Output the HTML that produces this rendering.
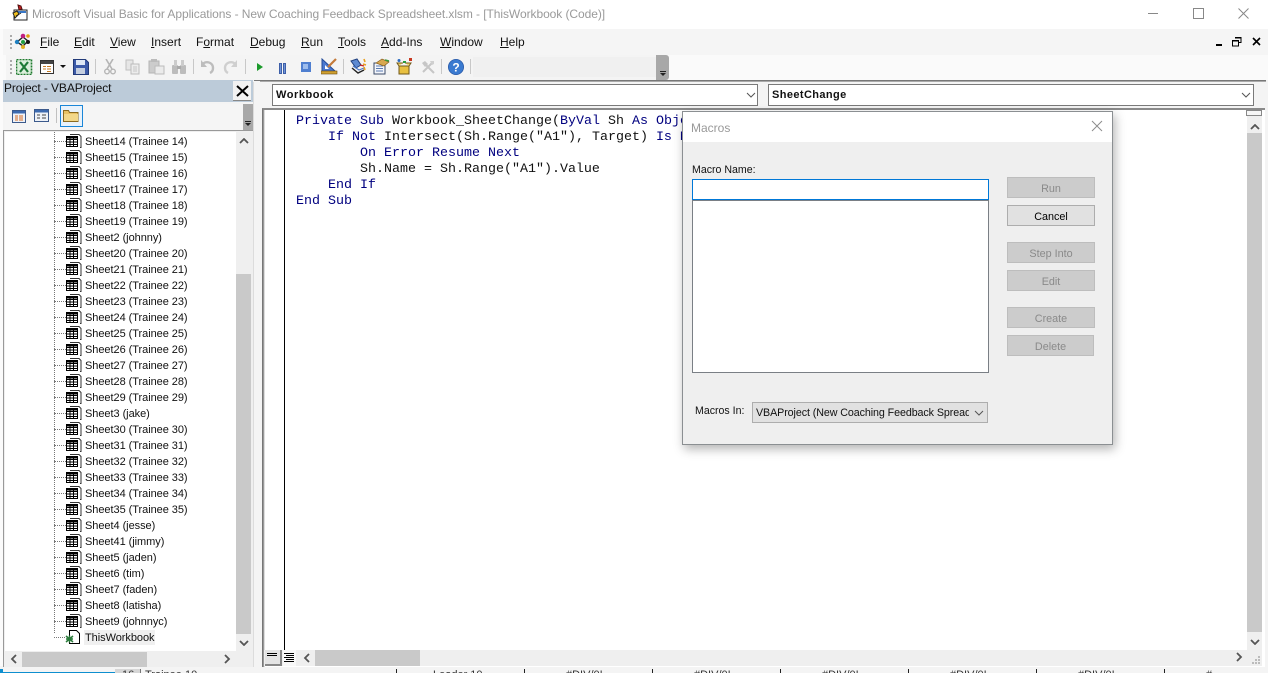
<!DOCTYPE html>
<html><head><meta charset="utf-8"><style>
html,body{margin:0;padding:0}
body{width:1268px;height:673px;overflow:hidden;position:relative;background:#fbfbfb;font-family:"Liberation Sans",sans-serif;font-size:11.5px;color:#000}
div,span,svg{position:absolute}
u{text-decoration:underline}
.t{white-space:nowrap;line-height:16px}
.m{top:34px;font-size:12px;white-space:nowrap;line-height:16px;color:#111}
.r{left:85px;font-size:11px;letter-spacing:-.05px;margin-top:1px;white-space:nowrap;line-height:16px;color:#111}
.s{left:66px;width:16px;height:16px}
.d{left:54px;width:12px;border-top:1px dotted #777;height:0}
.c{left:296px;margin-top:2px;font-family:"Liberation Mono",monospace;font-size:13.33px;line-height:16px;white-space:pre;color:#111}
.c b{font-weight:normal;color:#00007f}
.b{left:1007px;width:86px;height:19px;border:1px solid #bdbdbd;background:#ccc;color:#8a8a8a;text-align:center;line-height:22px;font-size:10.8px;overflow:hidden}
.x{top:668px;font-size:11px;color:#333;white-space:nowrap;line-height:12px}
.k{top:3px;width:1px;height:4px;background:#222}
</style></head><body>
<svg width="0" height="0"><defs>
<symbol id="sh" viewBox="0 0 16 16"><path d="M4 1.5h9l2 2V14.5H14" fill="#fff" stroke="#333"/><rect x="0.5" y="3.5" width="11" height="10" fill="#fff" stroke="#000"/><path d="M0.5 6.5h11M0.5 9h11M0.5 11.5h11M4 3.5v10M7.5 3.5v10" stroke="#000" fill="none"/><rect x="0.5" y="3.5" width="11" height="2" fill="#000"/></symbol>
<symbol id="cv" viewBox="0 0 10 6"><path d="M1 1l4 4 4-4" fill="none" stroke="#555" stroke-width="1"/></symbol>
</defs></svg>

<!-- bottom spreadsheet strip -->
<div style="left:0;top:666px;width:1268px;height:7px;background:#f4f4f4;overflow:hidden">
<div style="left:0;top:6px;width:115px;height:1px;background:#0e8fcf"></div>
<div style="left:0;top:3px;width:3px;height:4px;background:#0e8fcf"></div>
<div style="left:115px;top:3px;width:25px;height:4px;background:#d6d6d6"></div>
<div class="k" style="left:140px;background:#777"></div>
<div class="k" style="left:396px"></div>
<div class="k" style="left:524px"></div>
<div class="k" style="left:652px"></div>
<div class="k" style="left:780px"></div>
<div class="k" style="left:908px"></div>
<div class="k" style="left:1036px"></div>
<div class="k" style="left:1164px"></div>
<span class="x" style="left:122px;top:3px">16</span>
<span class="x" style="left:145px;top:3px">Trainee 10</span>
<span class="x" style="left:433px;top:3px">Leader 10</span>
<span class="x" style="left:566px;top:3px">#DIV/0!</span>
<span class="x" style="left:694px;top:3px">#DIV/0!</span>
<span class="x" style="left:822px;top:3px">#DIV/0!</span>
<span class="x" style="left:950px;top:3px">#DIV/0!</span>
<span class="x" style="left:1078px;top:3px">#DIV/0!</span>
<span class="x" style="left:1206px;top:3px">#</span>
</div>

<!-- title bar -->
<div style="left:0;top:0;width:1268px;height:29px;background:#fff"></div>
<svg style="left:11px;top:4px" width="18" height="18" viewBox="0 0 18 18"><path d="M3 6h13v10H3z" fill="#fff" stroke="#222"/><rect x="4" y="7" width="11" height="2" fill="#3a78c8"/><path d="M7 1l3 1 1 3-3 1z" fill="#c02020" stroke="#511"/><path d="M2 9l4-2 2 3-4 4z" fill="#f0c020" stroke="#222"/><path d="M5 12l5-3" stroke="#222"/></svg>
<span class="t" style="left:32px;top:6px;font-size:12px;color:#9a9a9a;letter-spacing:-.065px">Microsoft Visual Basic for Applications - New Coaching Feedback Spreadsheet.xlsm - [ThisWorkbook (Code)]</span>
<div style="left:1148px;top:13px;width:10px;height:1px;background:#888"></div>
<div style="left:1193px;top:8px;width:9px;height:9px;border:1px solid #888"></div>
<svg style="left:1238px;top:8px" width="11" height="11"><path d="M.5.5l10 10M10.5.5l-10 10" stroke="#888" fill="none"/></svg>

<!-- menu bar -->
<div style="left:3px;top:29px;width:1265px;height:26px;background:#f5f5f5"></div>
<div style="left:10px;top:35px;width:2px;height:14px;background:repeating-linear-gradient(#aaa 0 2px,transparent 2px 4px)"></div>
<svg style="left:14px;top:33px" width="18" height="17" viewBox="0 0 18 17"><path d="M3 9l6-5 5 4-5 5z" fill="none" stroke="#222" stroke-width="1.4"/><circle cx="9" cy="3" r="2.3" fill="#c02080"/><circle cx="14" cy="3" r="1.8" fill="#e0a010"/><circle cx="3" cy="9" r="2.2" fill="#2080c0"/><circle cx="9" cy="9" r="2" fill="#20a040"/><circle cx="14" cy="9" r="2" fill="#111"/><circle cx="9" cy="14" r="2" fill="#e0b020"/></svg>
<span class="m" style="left:40px"><u>F</u>ile</span>
<span class="m" style="left:74px"><u>E</u>dit</span>
<span class="m" style="left:110px"><u>V</u>iew</span>
<span class="m" style="left:151px"><u>I</u>nsert</span>
<span class="m" style="left:196px">F<u>o</u>rmat</span>
<span class="m" style="left:250px"><u>D</u>ebug</span>
<span class="m" style="left:301px"><u>R</u>un</span>
<span class="m" style="left:338px"><u>T</u>ools</span>
<span class="m" style="left:381px"><u>A</u>dd-Ins</span>
<span class="m" style="left:440px"><u>W</u>indow</span>
<span class="m" style="left:500px"><u>H</u>elp</span>
<div style="left:1216px;top:44px;width:6px;height:2px;background:#000"></div>
<svg style="left:1232px;top:37px" width="10" height="10"><path d="M3 .5h6v5H7M.5 3.5h6v5.5h-6z" fill="none" stroke="#000"/><path d="M3 1h6M0 4h6" stroke="#000"/></svg>
<svg style="left:1252px;top:37px" width="9" height="9"><path d="M1 1l7 7M8 1l-7 7" stroke="#000" stroke-width="1.6"/></svg>

<!-- toolbar -->
<div style="left:3px;top:55px;width:1265px;height:25px;background:#fafafa"></div>
<div style="left:6px;top:55px;width:650px;height:25px;background:#f4f4f4"></div>
<div style="left:10px;top:60px;width:2px;height:14px;background:repeating-linear-gradient(#aaa 0 2px,transparent 2px 4px)"></div>
<svg style="left:16px;top:59px" width="17" height="16"><rect x=".5" y=".5" width="15" height="15" fill="#dcefdc" stroke="#1f7a2f" stroke-width="1.6" stroke-dasharray="2 1"/><path d="M4 3l8 10M12 3L4 13" stroke="#1d7a36" stroke-width="2.2"/></svg>
<svg style="left:40px;top:60px" width="15" height="14"><rect x=".5" y=".5" width="13" height="13" fill="#fff" stroke="#333"/><rect x="1" y="1" width="12" height="3" fill="#444"/><path d="M3 6.5h3M7 6.5h4M3 9h3M7 9h4M7 11.5h4" stroke="#c77b25"/></svg>
<div style="left:60px;top:65px;border-left:3px solid transparent;border-right:3px solid transparent;border-top:3px solid #111"></div>
<svg style="left:73px;top:59px" width="16" height="16"><path d="M.5.5h12l3 3v12H.5z" fill="#3c5aa8" stroke="#223a78"/><rect x="3" y="1" width="9" height="5" fill="#dfe8f5"/><rect x="3" y="9" width="9" height="6" fill="#c5cfe0"/></svg>
<div style="left:95px;top:59px;width:1px;height:15px;background:#c8c8c8"></div>
<svg style="left:104px;top:59px" width="12" height="16"><path d="M2 0l6 10M9 0L3 10" stroke="#b5b5b5" stroke-width="1.6"/><circle cx="3" cy="12.5" r="2.3" fill="none" stroke="#b5b5b5" stroke-width="1.4"/><circle cx="9" cy="12.5" r="2.3" fill="none" stroke="#b5b5b5" stroke-width="1.4"/></svg>
<svg style="left:125px;top:59px" width="16" height="16"><path d="M1 1h7v10H1z" fill="#e6e6e6" stroke="#c0c0c0"/><path d="M6 5h8v10H6z" fill="#ececec" stroke="#bbb"/><path d="M8 8h4M8 10h4M8 12h4" stroke="#c6c6c6"/></svg>
<svg style="left:148px;top:59px" width="17" height="16"><rect x="1" y="2" width="10" height="12" fill="#ccc" stroke="#b5b5b5"/><rect x="3" y="0" width="6" height="3" fill="#bbb"/><path d="M7 7h9v8H7z" fill="#ebebeb" stroke="#bbb"/></svg>
<svg style="left:171px;top:59px" width="16" height="16"><rect x="1" y="6" width="6" height="9" rx="1" fill="#bcbcbc"/><rect x="9" y="6" width="6" height="9" rx="1" fill="#bcbcbc"/><rect x="3" y="1" width="3" height="6" fill="#ccc"/><rect x="10" y="1" width="3" height="6" fill="#ccc"/><rect x="6" y="7" width="4" height="3" fill="#aaa"/></svg>
<div style="left:193px;top:59px;width:1px;height:15px;background:#c8c8c8"></div>
<svg style="left:200px;top:59px" width="15" height="15"><path d="M2 6c3-5 11-3 11 3 0 2-1 4-3 5" fill="none" stroke="#bdbdbd" stroke-width="2.4"/><path d="M1 1v7h6z" fill="#bdbdbd"/></svg>
<svg style="left:223px;top:59px" width="15" height="15"><path d="M13 6c-3-5-11-3-11 3 0 2 1 4 3 5" fill="none" stroke="#cfcfcf" stroke-width="2.4"/><path d="M14 1v7H8z" fill="#cfcfcf"/></svg>
<div style="left:245px;top:59px;width:1px;height:15px;background:#c8c8c8"></div>
<div style="left:257px;top:63px;border-left:6px solid #1b9a2b;border-top:4.5px solid transparent;border-bottom:4.5px solid transparent"></div>
<div style="left:279px;top:63px;height:9px;background:#6f93d6;border:1px solid #3d5fa8;width:1px"></div>
<div style="left:283px;top:63px;height:9px;background:#6f93d6;border:1px solid #3d5fa8;width:1px"></div>
<svg style="left:301px;top:62px" width="10" height="10"><rect width="10" height="10" fill="#4f7fd0"/><rect x="2" y="2" width="5" height="5" fill="#9dbcec"/></svg>
<svg style="left:321px;top:58px" width="17" height="17"><path d="M1 1v12h13z" fill="#4a78d0" stroke="#224a98"/><path d="M4 7v4h4z" fill="#fff"/><path d="M7 9l8-8" stroke="#c47a3a" stroke-width="2.2"/><rect x="0" y="13" width="16" height="3" fill="#d0a030" stroke="#6a4a10" stroke-width=".6"/></svg>
<div style="left:343px;top:59px;width:1px;height:15px;background:#c8c8c8"></div>
<svg style="left:350px;top:58px" width="17" height="17"><path d="M1 3l6-2 4 6-5 3z" fill="#5d8ad2" stroke="#22417f"/><path d="M2 10l6 5 6-3" fill="none" stroke="#222" stroke-width="1.4"/><path d="M3 8l6 4 5-2" fill="none" stroke="#4a78c8" stroke-width="1.2"/><path d="M14 1l1 3M13 6l3 1M14 9l1 3" stroke="#e8a020" stroke-width="1.6"/><path d="M10 7l4 1" stroke="#c82020" stroke-width="1.4"/></svg>
<svg style="left:373px;top:58px" width="17" height="17"><path d="M1 5h11v11H1z" fill="#f4f6fb" stroke="#3a4a68"/><path d="M3 8h7M3 10.5h7M3 13h7" stroke="#5a7ab0"/><path d="M3 5l6-4 7 3-5 4z" fill="#d8a850" stroke="#886020" stroke-width=".7"/><path d="M12 2l4 1" stroke="#3a9a3a" stroke-width="1.5"/></svg>
<svg style="left:396px;top:58px" width="17" height="17"><path d="M3 8h10v8H3z" fill="#e8c040" stroke="#70581a"/><path d="M3 8l-2-3h6M13 8l2-3H9" fill="#f0d870" stroke="#70581a"/><circle cx="3" cy="2.5" r="1.5" fill="#2a6ac0"/><path d="M7 4h3" stroke="#2a9a3a" stroke-width="2"/><rect x="13" y="0" width="3" height="3" fill="#c83820"/></svg>
<svg style="left:421px;top:60px" width="14" height="14"><path d="M5 5l8 8M11 3l-9 9" stroke="#c6c6c6" stroke-width="2"/><path d="M1 3l3-2 3 3-3 3z" fill="#c6c6c6"/><path d="M9 1h4v3l-2 1z" fill="#d0d0d0"/></svg>
<div style="left:441px;top:59px;width:1px;height:15px;background:#c8c8c8"></div>
<svg style="left:448px;top:59px" width="16" height="16"><circle cx="8" cy="8" r="7.6" fill="#3a7ad0" stroke="#2a5aa8" stroke-width=".8"/><text x="8" y="12.5" font-family="Liberation Sans" font-size="12" font-weight="bold" fill="#fff" text-anchor="middle">?</text></svg>
<div style="left:470px;top:59px;width:1px;height:15px;background:#c8c8c8"></div>
<div style="left:473px;top:57px;width:183px;height:20px;background:#f0f0f0"></div>
<div style="left:656px;top:55px;width:13px;height:25px;background:#a8a8a8;border-radius:0 3px 3px 0"></div>
<div style="left:660px;top:71px;width:6px;height:1px;background:#222"></div>
<div style="left:660px;top:73px;border-left:3px solid transparent;border-right:3px solid transparent;border-top:3px solid #222"></div>

<!-- rule under toolbar -->
<div style="left:3px;top:80px;width:1265px;height:586px;background:#f4f4f4"></div>
<div style="left:254px;top:80px;width:1012px;height:1px;background:#777"></div>
<div style="left:260px;top:81px;width:1006px;height:1px;background:#aaa"></div>

<!-- project pane -->
<div style="left:3px;top:80px;width:250px;height:22px;background:#bccbd9"></div>
<span class="t" style="left:4px;top:80px;font-size:12px;color:#111;letter-spacing:-.1px">Project - VBAProject</span>
<div style="left:233px;top:81px;width:18px;height:19px;background:#f2f2f2;border-bottom:1px solid #888"></div>
<svg style="left:236px;top:85px" width="13" height="12"><path d="M1 1l11 10M12 1L1 11" stroke="#000" stroke-width="2"/></svg>
<div style="left:5px;top:104px;width:248px;height:26px;background:#f5f5f5"></div>
<svg style="left:12px;top:110px" width="15" height="14"><rect x=".5" y=".5" width="13" height="12" fill="#eef2f8" stroke="#3c5a8c"/><rect x="1" y="1" width="12" height="2.5" fill="#3c6ab0"/><path d="M3 6h3M7 6h4M3 8h3M7 8h4M3 10h3M7 10h4" stroke="#d86a20"/></svg>
<svg style="left:34px;top:109px" width="16" height="14"><rect x=".5" y=".5" width="14" height="12" fill="#eef2f8" stroke="#3c5a8c"/><rect x="1" y="1" width="13" height="2.5" fill="#3c6ab0"/><path d="M3 6h3M8 6h4M3 9h3M8 9h4" stroke="#444"/></svg>
<div style="left:56px;top:108px;width:1px;height:15px;background:#c0c0c0"></div>
<div style="left:60px;top:105px;width:21px;height:20px;border:1px solid #1a86d8;background:#e8f2fb"></div>
<svg style="left:63px;top:108px" width="16" height="15"><path d="M.5 2.5h5l1 2h8.5v9H.5z" fill="#e8c264" stroke="#8a6a20"/><path d="M1 6h14v7H1z" fill="#f2d88a"/></svg>
<div style="left:243px;top:104px;width:10px;height:26px;background:#a8a8a8"></div>
<div style="left:245px;top:121px;width:6px;height:1px;background:#222"></div>
<div style="left:245px;top:123px;border-left:3px solid transparent;border-right:3px solid transparent;border-top:3px solid #222"></div>

<div style="left:3px;top:130px;width:250px;height:537px;background:#efefef;border-top:1px solid #999;border-left:1px solid #999;box-sizing:border-box"></div>
<div style="left:5px;top:132px;width:231px;height:519px;background:#fff"></div>
<div style="left:54px;top:132px;height:501px;width:0;border-left:1px dotted #777"></div>
<div style="left:236px;top:132px;width:16px;height:519px;background:#efefef"></div>
<div style="left:236px;top:274px;width:15px;height:360px;background:#c9c9c9"></div>
<svg style="left:239px;top:138px" width="10" height="6" viewBox="0 0 10 6"><path d="M1 5l4-4 4 4" fill="none" stroke="#555" stroke-width="1.8"/></svg>
<svg style="left:239px;top:640px" width="10" height="6" viewBox="0 0 10 6"><path d="M1 1l4 4 4-4" fill="none" stroke="#555" stroke-width="1.8"/></svg>
<div style="left:5px;top:652px;width:247px;height:15px;background:#efefef"></div>
<div style="left:22px;top:652px;width:125px;height:15px;background:#c9c9c9"></div>
<svg style="left:10px;top:654px" width="7" height="10"><path d="M6 1L2 5l4 4" fill="none" stroke="#555" stroke-width="1.8"/></svg>
<svg style="left:224px;top:654px" width="7" height="10"><path d="M1 1l4 4-4 4" fill="none" stroke="#555" stroke-width="1.8"/></svg>

<!-- tree rows -->
<div class="d" style="top:141px"></div><svg class="s" style="top:133px"><use href="#sh"/></svg><span class="r" style="top:133px">Sheet14 (Trainee 14)</span>
<div class="d" style="top:157px"></div><svg class="s" style="top:149px"><use href="#sh"/></svg><span class="r" style="top:149px">Sheet15 (Trainee 15)</span>
<div class="d" style="top:173px"></div><svg class="s" style="top:165px"><use href="#sh"/></svg><span class="r" style="top:165px">Sheet16 (Trainee 16)</span>
<div class="d" style="top:189px"></div><svg class="s" style="top:181px"><use href="#sh"/></svg><span class="r" style="top:181px">Sheet17 (Trainee 17)</span>
<div class="d" style="top:205px"></div><svg class="s" style="top:197px"><use href="#sh"/></svg><span class="r" style="top:197px">Sheet18 (Trainee 18)</span>
<div class="d" style="top:221px"></div><svg class="s" style="top:213px"><use href="#sh"/></svg><span class="r" style="top:213px">Sheet19 (Trainee 19)</span>
<div class="d" style="top:237px"></div><svg class="s" style="top:229px"><use href="#sh"/></svg><span class="r" style="top:229px">Sheet2 (johnny)</span>
<div class="d" style="top:253px"></div><svg class="s" style="top:245px"><use href="#sh"/></svg><span class="r" style="top:245px">Sheet20 (Trainee 20)</span>
<div class="d" style="top:269px"></div><svg class="s" style="top:261px"><use href="#sh"/></svg><span class="r" style="top:261px">Sheet21 (Trainee 21)</span>
<div class="d" style="top:285px"></div><svg class="s" style="top:277px"><use href="#sh"/></svg><span class="r" style="top:277px">Sheet22 (Trainee 22)</span>
<div class="d" style="top:301px"></div><svg class="s" style="top:293px"><use href="#sh"/></svg><span class="r" style="top:293px">Sheet23 (Trainee 23)</span>
<div class="d" style="top:317px"></div><svg class="s" style="top:309px"><use href="#sh"/></svg><span class="r" style="top:309px">Sheet24 (Trainee 24)</span>
<div class="d" style="top:333px"></div><svg class="s" style="top:325px"><use href="#sh"/></svg><span class="r" style="top:325px">Sheet25 (Trainee 25)</span>
<div class="d" style="top:349px"></div><svg class="s" style="top:341px"><use href="#sh"/></svg><span class="r" style="top:341px">Sheet26 (Trainee 26)</span>
<div class="d" style="top:365px"></div><svg class="s" style="top:357px"><use href="#sh"/></svg><span class="r" style="top:357px">Sheet27 (Trainee 27)</span>
<div class="d" style="top:381px"></div><svg class="s" style="top:373px"><use href="#sh"/></svg><span class="r" style="top:373px">Sheet28 (Trainee 28)</span>
<div class="d" style="top:397px"></div><svg class="s" style="top:389px"><use href="#sh"/></svg><span class="r" style="top:389px">Sheet29 (Trainee 29)</span>
<div class="d" style="top:413px"></div><svg class="s" style="top:405px"><use href="#sh"/></svg><span class="r" style="top:405px">Sheet3 (jake)</span>
<div class="d" style="top:429px"></div><svg class="s" style="top:421px"><use href="#sh"/></svg><span class="r" style="top:421px">Sheet30 (Trainee 30)</span>
<div class="d" style="top:445px"></div><svg class="s" style="top:437px"><use href="#sh"/></svg><span class="r" style="top:437px">Sheet31 (Trainee 31)</span>
<div class="d" style="top:461px"></div><svg class="s" style="top:453px"><use href="#sh"/></svg><span class="r" style="top:453px">Sheet32 (Trainee 32)</span>
<div class="d" style="top:477px"></div><svg class="s" style="top:469px"><use href="#sh"/></svg><span class="r" style="top:469px">Sheet33 (Trainee 33)</span>
<div class="d" style="top:493px"></div><svg class="s" style="top:485px"><use href="#sh"/></svg><span class="r" style="top:485px">Sheet34 (Trainee 34)</span>
<div class="d" style="top:509px"></div><svg class="s" style="top:501px"><use href="#sh"/></svg><span class="r" style="top:501px">Sheet35 (Trainee 35)</span>
<div class="d" style="top:525px"></div><svg class="s" style="top:517px"><use href="#sh"/></svg><span class="r" style="top:517px">Sheet4 (jesse)</span>
<div class="d" style="top:541px"></div><svg class="s" style="top:533px"><use href="#sh"/></svg><span class="r" style="top:533px">Sheet41 (jimmy)</span>
<div class="d" style="top:557px"></div><svg class="s" style="top:549px"><use href="#sh"/></svg><span class="r" style="top:549px">Sheet5 (jaden)</span>
<div class="d" style="top:573px"></div><svg class="s" style="top:565px"><use href="#sh"/></svg><span class="r" style="top:565px">Sheet6 (tim)</span>
<div class="d" style="top:589px"></div><svg class="s" style="top:581px"><use href="#sh"/></svg><span class="r" style="top:581px">Sheet7 (faden)</span>
<div class="d" style="top:605px"></div><svg class="s" style="top:597px"><use href="#sh"/></svg><span class="r" style="top:597px">Sheet8 (latisha)</span>
<div class="d" style="top:621px"></div><svg class="s" style="top:613px"><use href="#sh"/></svg><span class="r" style="top:613px">Sheet9 (johnnyc)</span>
<div class="d" style="top:637px;width:11px"></div>
<svg style="left:65px;top:629px" width="16" height="16"><path d="M4.5 1.5h7l3 3v10h-10z" fill="#fff" stroke="#000"/><path d="M1 7l7 6M8 7l-7 6M4.5 6.5v7M1 10h7" stroke="#2a7a3a" stroke-width="1.5"/></svg>
<div style="left:84px;top:630px;width:71px;height:15px;background:#f0f0f0"></div>
<span class="r" style="top:629px">ThisWorkbook</span>

<!-- separator -->
<div style="left:253px;top:82px;width:1px;height:585px;background:#dcdcdc"></div>

<!-- combos -->
<div style="left:272px;top:84px;width:484px;height:20px;background:#fff;border:1px solid #7a7a7a"></div>
<span class="t" style="left:276px;top:87px;font-weight:bold;font-size:11px;letter-spacing:.55px;color:#111">Workbook</span>
<svg style="left:746px;top:92px" width="10" height="6"><use href="#cv"/></svg>
<div style="left:768px;top:84px;width:484px;height:20px;background:#fff;border:1px solid #7a7a7a"></div>
<span class="t" style="left:772px;top:87px;font-weight:bold;font-size:11px;letter-spacing:.4px;color:#111">SheetChange</span>
<svg style="left:1241px;top:92px" width="10" height="6"><use href="#cv"/></svg>

<!-- code pane -->
<div style="left:262px;top:108px;width:1003px;height:559px;background:#fff;border-top:2px solid #8a8a8a;border-left:1px solid #777;box-sizing:border-box"></div>
<div style="left:263px;top:110px;width:1px;height:557px;background:#999"></div>
<div style="left:264px;top:110px;width:1px;height:557px;background:#ddd"></div>
<div style="left:284px;top:110px;width:1px;height:540px;background:#000"></div>
<span class="c" style="top:112px"><b>Private Sub</b> Workbook_SheetChange(<b>ByVal</b> Sh <b>As</b> <b>Object</b>, <b>ByVal</b> Target <b>As</b> Range)</span>
<span class="c" style="top:128px">    <b>If Not</b> Intersect(Sh.Range("A1"), Target) <b>Is Nothing Then</b></span>
<span class="c" style="top:144px">        <b>On Error Resume Next</b></span>
<span class="c" style="top:160px">        Sh.Name = Sh.Range("A1").Value</span>
<span class="c" style="top:176px">    <b>End If</b></span>
<span class="c" style="top:192px"><b>End Sub</b></span>

<!-- code scrollbars -->
<div style="left:1247px;top:110px;width:15px;height:540px;background:#efefef"></div>
<div style="left:1246px;top:110px;width:16px;height:6px;background:#f6f6f6;border:1px solid #888;box-sizing:border-box"></div>
<div style="left:1247px;top:133px;width:15px;height:499px;background:#c9c9c9"></div>
<svg style="left:1250px;top:124px" width="10" height="6" viewBox="0 0 10 6"><path d="M1 5l4-4 4 4" fill="none" stroke="#555" stroke-width="1.8"/></svg>
<svg style="left:1250px;top:639px" width="10" height="6" viewBox="0 0 10 6"><path d="M1 1l4 4 4-4" fill="none" stroke="#555" stroke-width="1.8"/></svg>
<div style="left:264px;top:650px;width:998px;height:16px;background:#efefef"></div>
<div style="left:265px;top:650px;width:15px;height:14px;background:#e4e4e4;border-right:2px solid #888;border-bottom:2px solid #888"></div>
<div style="left:267px;top:653px;width:10px;height:1px;background:#000"></div><div style="left:267px;top:655px;width:10px;height:1px;background:#000"></div>
<div style="left:283px;top:650px;width:13px;height:16px;background:#f8f8f8"></div>
<div style="left:284px;top:653px;width:10px;height:1px;background:#000"></div><div style="left:286px;top:655px;width:8px;height:1px;background:#000"></div><div style="left:284px;top:657px;width:10px;height:1px;background:#000"></div><div style="left:286px;top:659px;width:8px;height:1px;background:#000"></div><div style="left:284px;top:661px;width:10px;height:1px;background:#000"></div>
<svg style="left:303px;top:653px" width="7" height="10"><path d="M6 1L2 5l4 4" fill="none" stroke="#555" stroke-width="1.8"/></svg>
<div style="left:315px;top:650px;width:105px;height:16px;background:#c9c9c9"></div>
<svg style="left:1236px;top:652px" width="7" height="10"><path d="M1 1l4 4-4 4" fill="none" stroke="#555" stroke-width="1.8"/></svg>
<svg style="left:1252px;top:656px" width="9" height="9"><path d="M6 0h2v2H6zM3 3h2v2H3zM6 3h2v2H6zM0 6h2v2H0zM3 6h2v2H3zM6 6h2v2H6z" fill="#bbb"/></svg>

<!-- dialog -->
<div style="left:682px;top:111px;width:431px;height:334px;background:#efefef;border:1px solid #8b8f92;box-sizing:border-box;box-shadow:2px 4px 10px rgba(0,0,0,.3)"></div>
<div style="left:683px;top:112px;width:429px;height:30px;background:#fff"></div>
<span class="t" style="left:691px;top:120px;font-size:12px;color:#999">Macros</span>
<svg style="left:1091px;top:120px" width="12" height="12"><path d="M1 1l10 10M11 1L1 11" stroke="#8c8c8c" fill="none"/></svg>
<span class="t" style="left:692px;top:162px;font-size:10.6px;color:#111">Macro Name:</span>
<div style="left:692px;top:179px;width:297px;height:21px;background:#fff;border:1px solid #0078d7;box-sizing:border-box"></div>
<div style="left:692px;top:200px;width:297px;height:173px;background:#fff;border:1px solid #7a7f85;box-sizing:border-box"></div>
<div class="b" style="top:177px">Run</div>
<div class="b" style="top:205px;background:#e1e1e1;border-color:#adadad;color:#000">Cancel</div>
<div class="b" style="top:242px">Step Into</div>
<div class="b" style="top:270px">Edit</div>
<div class="b" style="top:307px">Create</div>
<div class="b" style="top:335px;width:85px">Delete</div>
<span class="t" style="left:695px;top:403px;font-size:10.6px;color:#111">Macros In:</span>
<div style="left:752px;top:402px;width:236px;height:21px;background:#e1e1e1;border:1px solid #adadad;box-sizing:border-box"></div>
<div class="t" style="left:756px;top:405px;width:213px;overflow:hidden;font-size:10.7px;letter-spacing:-.08px;color:#111">VBAProject (New Coaching Feedback Spreadsheet.xlsm)</div>
<svg style="left:974px;top:410px" width="10" height="6"><use href="#cv"/></svg>
</body></html>
